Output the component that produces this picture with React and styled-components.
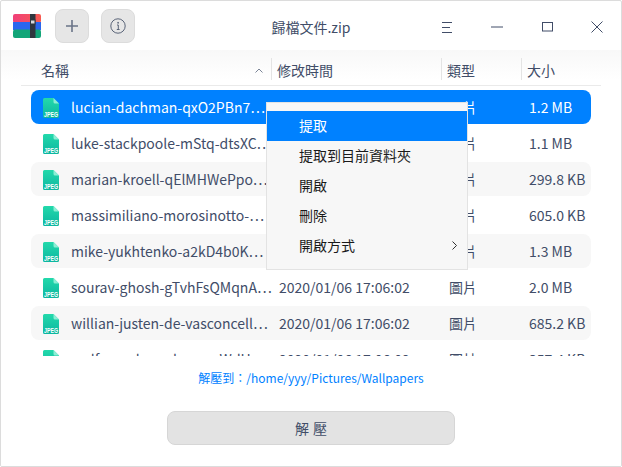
import React from 'react'
import styled, { createGlobalStyle } from 'styled-components'

const files = [
  { name: 'lucian-dachman-qxO2PBn7⋯', time: '', size: '1.2 MB', selected: true },
  { name: 'luke-stackpoole-mStq-dtsXC⋯', time: '', size: '1.1 MB' },
  { name: 'marian-kroell-qElMHWePpo⋯', time: '', size: '299.8 KB' },
  { name: 'massimiliano-morosinotto-⋯', time: '', size: '605.0 KB' },
  { name: 'mike-yukhtenko-a2kD4b0K⋯', time: '', size: '1.3 MB' },
  { name: 'sourav-ghosh-gTvhFsQMqnA⋯', time: '2020/01/06 17:06:02', size: '2.0 MB' },
  { name: 'willian-justen-de-vasconcell⋯', time: '2020/01/06 17:06:02', size: '685.2 KB' },
  { name: 'wolfgang-hasselmann-WdHx⋯', time: '2020/01/06 17:06:02', size: '357.4 KB' },
]

const menuItems = ['提取', '提取到目前資料夾', '開啟', '刪除', '開啟方式']

const Global = createGlobalStyle`
  html, body { margin: 0; padding: 0; background: #fff; }
  body { font-family: "Noto Sans CJK TC", "Noto Sans", sans-serif; }
`

const Win = styled.div`
  width: 622px;
  height: 467px;
  box-sizing: border-box;
  border: 1px solid #dcdcdc;
  border-radius: 2px;
  background: #fff;
  position: relative;
  display: flex;
  flex-direction: column;
  overflow: hidden;
`

const TitleBar = styled.div`
  height: 49px;
  box-sizing: border-box;
  padding: 1px 0 0 12px;
  flex: none;
  display: flex;
  align-items: center;
  position: relative;
`

const SquareBtn = styled.div`
  width: 32px;
  height: 32px;
  margin-left: ${p => p.$ml}px;
  border: 1px solid #dcdcdc;
  border-radius: 8px;
  background: #e6e6e6;
  display: flex;
  align-items: center;
  justify-content: center;
  flex: none;
`

const Title = styled.div`
  position: absolute;
  left: 0;
  right: 0;
  top: 14px;
  text-align: center;
  font-size: 14px;
  line-height: 24px;
  color: #414d68;
`

const WinControls = styled.div`
  margin-left: auto;
  margin-right: -1px;
  display: flex;
  height: 100%;
`

const WinBtn = styled.div`
  width: 50px;
  height: 100%;
  padding-top: 2px;
  box-sizing: border-box;
  display: flex;
  align-items: center;
  justify-content: center;
`

const Body = styled.div`
  flex: 1;
  display: flex;
  flex-direction: column;
  background: linear-gradient(#f8f8f8, #ffffff 30px);
`

const Header = styled.div`
  height: 36px;
  margin: 0 20px;
  padding-top: 8px;
  box-sizing: border-box;
  border-bottom: 1px solid #eaeaea;
  display: grid;
  grid-template-columns: 251px 170px 80px 1fr;
  align-items: start;
  flex: none;
`

const HeaderCell = styled.div`
  height: 22px;
  line-height: 24px;
  font-size: 14px;
  color: #414d68;
  padding-left: ${p => p.$pl}px;
  position: relative;
  border-right: ${p => (p.$sep ? '1px solid #e4e4e4' : 'none')};
  box-sizing: border-box;
`

const SortMark = styled.svg`
  position: absolute;
  right: 8px;
  top: 10px;
`

const List = styled.div`
  height: 266px;
  margin: 4px 30px 0;
  display: flex;
  flex-direction: column;
  gap: 2px;
  overflow: hidden;
  flex: none;
`

const Row = styled.div`
  height: 34px;
  flex: none;
  border-radius: 8px;
  display: grid;
  grid-template-columns: 40px 208px 170px 80px 1fr;
  align-items: center;
  font-size: 14px;
  color: ${p => (p.$selected ? '#fff' : '#414d68')};
  background: ${p => (p.$selected ? '#0081ff' : p.$alt ? '#f7f7f7' : 'transparent')};
`

const IconCell = styled.div`
  display: flex;
  justify-content: center;
  padding-top: 1px;
`

const Cell = styled.div`
  white-space: nowrap;
  overflow: hidden;
  line-height: 20px;
`

const PathLine = styled.div`
  margin-top: 12px;
  text-align: center;
  font-size: 12px;
  line-height: 20px;
  color: #0081ff;
`

const Extract = styled.div`
  width: 288px;
  height: 34px;
  margin: 23px auto 0;
  box-sizing: border-box;
  border: 1px solid #d6d6d6;
  border-radius: 8px;
  background: #e3e3e3;
  text-align: center;
  line-height: 32px;
  font-size: 14px;
  color: #414d68;
  word-spacing: 1px;
`

const Menu = styled.div`
  position: absolute;
  left: 265px;
  top: 101px;
  width: 202px;
  height: 168px;
  box-sizing: border-box;
  padding-top: 8px;
  background: #f7f7f7;
  border: 1px solid #e3e3e3;
  z-index: 2;
`

const MenuItem = styled.div`
  height: 30px;
  padding-left: 32px;
  line-height: 28px;
  font-size: 14px;
  position: relative;
  color: ${p => (p.$active ? '#fff' : '#1a1a1a')};
  background: ${p => (p.$active ? '#0081ff' : 'transparent')};
`

const Chevron = styled.svg`
  position: absolute;
  right: 10px;
  top: 10px;
`

const JpegIcon = () => (
  <svg width="16" height="20" viewBox="0 0 16 20" overflow="visible">
    <defs>
      <linearGradient id="jpg" x1="0" y1="0" x2="0" y2="1">
        <stop offset="0" stopColor="#23d9ab" />
        <stop offset="1" stopColor="#0cb6a0" />
      </linearGradient>
    </defs>
    <path d="M1.5 0H10.5L16 5.5V18.5A1.5 1.5 0 0 1 14.5 20H1.5A1.5 1.5 0 0 1 0 18.5V1.5A1.5 1.5 0 0 1 1.5 0Z" fill="url(#jpg)" />
    <path d="M10.5 0L16 5.5H12A1.5 1.5 0 0 1 10.5 4Z" fill="#8ceed5" />
    <text x="8" y="18.5" textAnchor="middle" fontSize="7" fontWeight="700" fill="#fff" textLength="14" lengthAdjust="spacingAndGlyphs" fontFamily="Liberation Sans, sans-serif">JPEG</text>
  </svg>
)

const ArchiveLogo = () => (
  <svg width="28" height="24" viewBox="0 0 28 24">
    <defs>
      <linearGradient id="top" x1="0" y1="0" x2="1" y2="0">
        <stop offset="0" stopColor="#f0407a" />
        <stop offset="1" stopColor="#f85a50" />
      </linearGradient>
    </defs>
    <rect x="0" y="0" width="28" height="9" rx="2" fill="url(#top)" />
    <rect x="0" y="8" width="28" height="8" fill="#2a66ee" />
    <rect x="0" y="15.5" width="28" height="8.5" rx="2" fill="#12a578" />
    <rect x="17" y="0" width="5.5" height="24" fill="#30363e" />
    <rect x="17.5" y="6" width="4.5" height="4" fill="#d8dadc" stroke="#30363e" strokeWidth="1" />
  </svg>
)

export default function App() {
  return (
    <Win>
      <Global />
      <TitleBar>
        <ArchiveLogo />
        <SquareBtn $ml={14}>
          <svg width="12" height="12" viewBox="0 0 12 12" stroke="#6a7488" strokeWidth="1.6"><path d="M6 0V12M0 6H12" /></svg>
        </SquareBtn>
        <SquareBtn $ml={12}>
          <svg width="16" height="16" viewBox="0 0 16 16" fill="none" stroke="#5a6478" strokeWidth="1">
            <circle cx="8" cy="8" r="7.2" />
            <path d="M7 7H8.3V11.5M6.8 11.5H9.6M7.7 4.4H8.5V5.2H7.7Z" />
          </svg>
        </SquareBtn>
        <Title>歸檔文件.zip</Title>
        <WinControls>
          <WinBtn>
            <svg width="11" height="11" viewBox="0 0 11 11" stroke="#414d68" strokeWidth="1"><path d="M0 .5H10M0 5.5H8M0 10.5H10" /></svg>
          </WinBtn>
          <WinBtn>
            <svg width="12" height="2" viewBox="0 0 12 2" stroke="#414d68" strokeWidth="1"><path d="M0 1H12" /></svg>
          </WinBtn>
          <WinBtn>
            <svg width="11" height="10" viewBox="0 0 11 10" fill="none" stroke="#414d68" strokeWidth="1"><rect x=".5" y=".5" width="10" height="8.5" /></svg>
          </WinBtn>
          <WinBtn>
            <svg width="12" height="12" viewBox="0 0 12 12" stroke="#414d68" strokeWidth="1"><path d="M.5 .5L11.5 11.5M11.5 .5L.5 11.5" /></svg>
          </WinBtn>
        </WinControls>
      </TitleBar>
      <Body>
        <Header>
          <HeaderCell $pl={20} $sep>
            名稱
            <SortMark width="8" height="5" viewBox="0 0 8 5" fill="none" stroke="#7a8496"><path d="M.5 4.5L4 1L7.5 4.5" /></SortMark>
          </HeaderCell>
          <HeaderCell $pl={5} $sep>修改時間</HeaderCell>
          <HeaderCell $pl={5} $sep>類型</HeaderCell>
          <HeaderCell $pl={5}>大小</HeaderCell>
        </Header>
        <List>
          {files.map((f, i) => (
            <Row key={f.name} $selected={f.selected} $alt={i % 2 === 0}>
              <IconCell><JpegIcon /></IconCell>
              <Cell>{f.name}</Cell>
              <Cell>{f.time}</Cell>
              <Cell>圖片</Cell>
              <Cell>{f.size}</Cell>
            </Row>
          ))}
        </List>
        <PathLine>解壓到：/home/yyy/Pictures/Wallpapers</PathLine>
        <Extract>解 壓</Extract>
      </Body>
      <Menu>
        {menuItems.map((m, i) => (
          <MenuItem key={m} $active={i === 0}>
            {m}
            {i === 4 && (
              <Chevron width="5" height="9" viewBox="0 0 5 9" fill="none" stroke="#333"><path d="M.5 .5L4.5 4.5L.5 8.5" /></Chevron>
            )}
          </MenuItem>
        ))}
      </Menu>
    </Win>
  )
}
